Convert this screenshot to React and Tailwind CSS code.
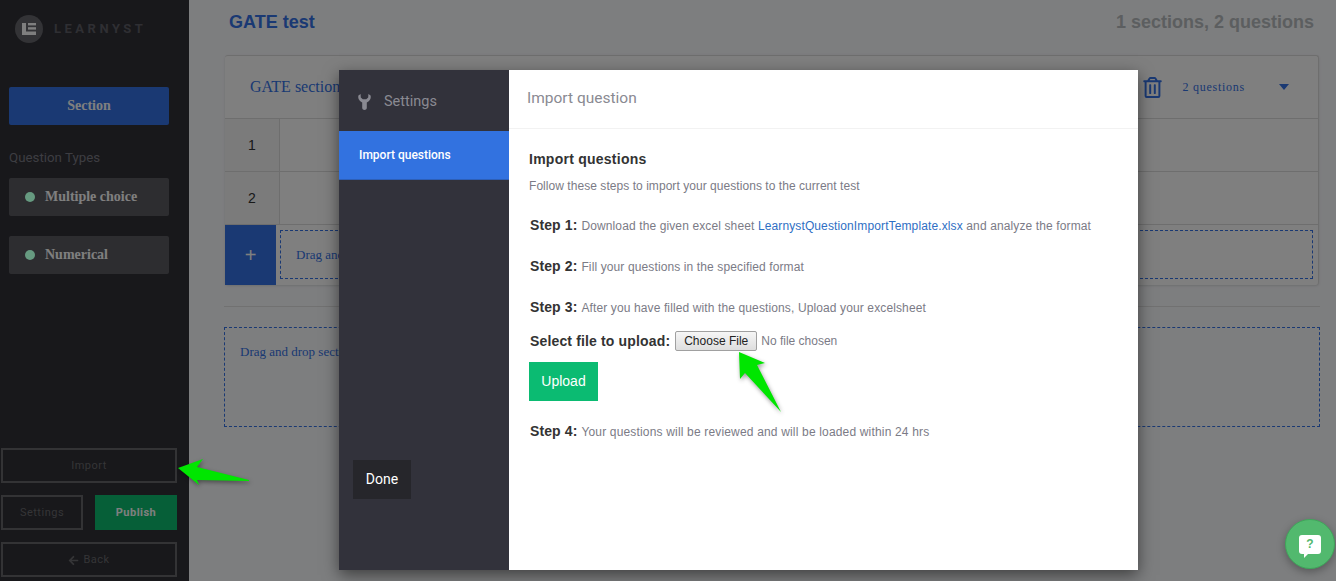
import React from "react";
import { FaArrowLeft, FaRegTrashAlt } from "react-icons/fa";

function Wrench() {
  return (
    <svg width="13" height="16" viewBox="0 0 13 16" className="fill-[#8a8a92]">
      <path d="M2.6 0 L0.4 1.6 Q-0.3 5.2 2 7 Q3.6 8 4.2 8.6 L4.2 14.2 Q4.4 16 6.5 16 Q8.6 16 8.8 14.2 L8.8 8.6 Q9.4 8 11 7 Q13.3 5.2 12.6 1.6 L10.4 0 L10.2 3.4 L8.2 5.2 L4.8 5.2 L2.8 3.4 Z" />
    </svg>
  );
}

function LogoMark() {
  return (
    <svg width="14" height="12" viewBox="0 0 14 12" className="fill-white">
      <path d="M0 0 H4 V8.5 H14 V12 H0 Z" />
      <rect x="6" y="0" width="8" height="2.4" />
      <rect x="6" y="4.2" width="8" height="2.4" />
    </svg>
  );
}

function Arrow({ className, points }) {
  return (
    <svg className={className} viewBox="0 0 80 80" width="80" height="80">
      <polygon points={points} className="fill-[#00e600]" />
    </svg>
  );
}

function Row({ n }) {
  return (
    <div className="flex h-[53px] border-b border-[#dcdcdc]">
      <div className="flex w-[55px] items-center justify-center border-r border-[#dcdcdc] bg-[#f6f6f6] pb-px font-['Liberation_Sans',sans-serif] text-sm text-[#333]">
        {n}
      </div>
      <div className="flex-1" />
    </div>
  );
}

function QuestionType({ label, className }) {
  return (
    <div className={"mx-[9px] flex h-[38px] w-[160px] items-center rounded-[2px] bg-[#5b5b61] pl-4 font-['Liberation_Serif',serif] text-sm font-bold text-white " + className}>
      <span className="relative z-10 mr-[10px] h-[10px] w-[10px] rounded-full bg-[#669a80]" />
      {label}
    </div>
  );
}

function Step({ n, children, className }) {
  return (
    <p className={"flex h-5 items-baseline pl-px leading-5 " + className}>
      <b className="mr-1 text-sm tracking-[0.1px] text-[#333]">Step {n}:</b>
      <span>{children}</span>
    </p>
  );
}

function App() {
  return (
    <div className="relative flex h-[581px] w-[1336px] overflow-hidden bg-[#fbfcff] font-['Liberation_Sans',sans-serif]">
      {/* sidebar */}
      <aside className="flex w-[189px] flex-none flex-col bg-[#303036]">
        <div className="flex items-center gap-[11px] pl-[15px] pt-[15px]">
          <div className="flex h-[28px] w-[28px] items-center justify-center rounded-full bg-[#66666c]">
            <LogoMark />
          </div>
          <span className="font-['Roboto',sans-serif] text-[13px] font-bold tracking-[3.5px] text-[#5e5e66]">LEARNYST</span>
        </div>
        <div className="mx-[9px] mt-[44px] flex h-[38px] w-[160px] items-center justify-center rounded-[2px] bg-[#3472e6] font-['Liberation_Serif',serif] text-sm font-bold text-white">
          Section
        </div>
        <div className="ml-[9px] mt-[23px] h-5 font-['Roboto',sans-serif] text-[13.3px] leading-5 text-[#7b7b85]">Question Types</div>
        <QuestionType label="Multiple choice" className="mt-[10px]" />
        <QuestionType label="Numerical" className="mt-5" />
        <div className="mt-auto flex flex-col gap-3 px-px pb-1 font-['Roboto',sans-serif] text-[11px] tracking-[0.5px] text-[#6a6a6e]">
          <div className="flex h-[35px] w-[176px] items-center justify-center border-2 border-[#66666a] pt-px">Import</div>
          <div className="flex gap-3">
            <div className="flex h-[35px] w-[82px] items-center justify-center border-2 border-[#66666a] pt-px">Settings</div>
            <div className="flex h-[35px] w-[82px] items-center justify-center bg-[#0cbf71] pt-px font-bold text-white">Publish</div>
          </div>
          <div className="flex h-[35px] w-[176px] items-center justify-center gap-1 border-2 border-[#66666a] pt-px">
            <FaArrowLeft size={11} />
            Back
          </div>
        </div>
      </aside>

      {/* test content, behind the overlay */}
      <main className="flex-1 pl-[35px] pr-4">
        <div className="flex h-[44px] items-center justify-between pl-[5px] pr-[6px] text-lg font-bold">
          <span className="text-[#3472e6]">GATE test</span>
          <span className="text-[#b8bcc0]">1 sections, 2 questions</span>
        </div>
        <div className="ml-px mr-px mt-[11px] rounded-[3px] border border-b-0 border-l-0 border-[#dcdcdc] bg-white font-['Liberation_Serif',serif] shadow-sm">
          <div className="flex h-[63px] items-center border-b border-[#dcdcdc] pl-[25px] text-[#3472e6]">
            <span className="text-base">GATE section</span>
            <FaRegTrashAlt size={21} className="ml-auto" />
            <span className="ml-[19px] text-xs tracking-[0.75px]">2 questions</span>
            <span className="ml-[34px] mr-[29px] h-0 w-0 border-x-[5px] border-t-[6px] border-x-transparent border-t-[#3472e6]" />
          </div>
          <Row n={1} />
          <Row n={2} />
          <div className="flex h-[60px]">
            <div className="flex w-[51px] items-center justify-center bg-[#3472e6] font-['Liberation_Sans',sans-serif] text-xl text-white">+</div>
            <div className="mb-[6px] ml-1 mr-[5px] mt-[5px] flex flex-1 items-center border border-dashed border-[#3472e6] pl-[15px] text-[13px] text-[#3472e6]">Drag and drop</div>
          </div>
        </div>
        <div className="mt-[21px] border-t border-[#e2e2e2]" />
        <div className="mt-5 h-[100px] border border-dashed border-[#3472e6] pl-[15px] pt-[14px] font-['Liberation_Serif',serif] text-[13px] text-[#3472e6]">
          Drag and drop sections here
        </div>
      </main>

      {/* overlay */}
      <div className="absolute inset-0 bg-black/50" />

      {/* modal */}
      <div className="absolute left-[339px] top-[70px] flex h-[500px] w-[799px] shadow-[0_5px_15px_rgba(0,0,0,0.5)]">
        <div className="relative flex w-[170px] flex-none flex-col bg-[#32323b]">
          <div className="flex h-[61px] items-center pl-[19px] pt-[3px] font-['Roboto',sans-serif] text-[14.5px] text-[#8a8a92]">
            <Wrench />
            <span className="ml-[13px]">Settings</span>
          </div>
          <div className="flex h-[49px] items-center border-b border-[#2d5fb8] bg-[#3272e0] pl-5 font-['Roboto',sans-serif] text-xs font-medium text-white">
            Import questions
          </div>
          <div className="absolute bottom-[71px] left-[14px] flex h-[39px] w-[58px] items-center justify-center bg-[#26262b] pb-px font-['Roboto',sans-serif] text-sm text-white">
            Done
          </div>
        </div>
        <div className="flex-1 bg-white text-xs text-[#7b7b86]">
          <div className="flex h-[59px] items-center border-b border-[#f2f2f2] pb-px pl-[18px] font-['Roboto',sans-serif] text-[15.5px] text-[#8a8a92]">
            Import question
          </div>
          <div className="pl-5 pt-5">
            <h4 className="text-sm font-bold leading-[20px] tracking-[0.25px] text-[#333]">Import questions</h4>
            <p className="mt-[9px] leading-4 tracking-[0.05px]">Follow these steps to import your questions to the current test</p>
            <Step n={1} className="mt-[21px] tracking-[0.12px]">
              Download the given excel sheet <span className="text-[#2f6fc4]">LearnystQuestionImportTemplate.xlsx</span> and analyze the format
            </Step>
            <Step n={2} className="mt-[21px] tracking-[0.12px]">Fill your questions in the specified format</Step>
            <Step n={3} className="mt-[21px] tracking-[0.12px]">After you have filled with the questions, Upload your excelsheet</Step>
            <div className="mt-[14px] flex items-center pl-px">
              <b className="text-sm tracking-[0.15px] text-[#333]">Select file to upload:</b>
              <button className="ml-[5px] h-[20px] w-[82px] rounded-[2px] border border-[#a0a0a0] bg-linear-to-b from-[#f6f6f6] to-[#dedede] text-xs text-[#222]">Choose File</button>
              <span className="ml-1">No file chosen</span>
            </div>
            <button className="mt-[11px] block h-[39px] w-[69px] bg-[#0bbb72] pb-px text-sm text-white">Upload</button>
            <Step n={4} className="mt-5 tracking-[0.17px]">Your questions will be reviewed and will be loaded within 24 hrs</Step>
          </div>
        </div>
      </div>

      {/* annotation arrows */}
      <Arrow className="absolute left-[175px] top-[445px] drop-shadow-[1px_2px_2px_rgba(0,0,0,0.4)]" points="3,23 28,14 22,22 74,35 74,36 22,35 24,40" />
      <Arrow className="absolute left-[735px] top-[349px] drop-shadow-[1px_2px_2px_rgba(0,0,0,0.4)]" points="4,3 30,14 22,16 46,63 10,24 5,30" />

      {/* help button */}
      <div className="absolute left-[1285px] top-[519px] flex h-[50px] w-[50px] items-center justify-center rounded-full border border-[#3fa65a] bg-[#52b96e] shadow-[0_3px_8px_rgba(0,0,0,0.3)]">
        <div className="relative flex h-[19px] w-[22px] items-center justify-center rounded-[3px] bg-white text-xs font-bold text-[#52b96e]">
          ?
          <span className="absolute -bottom-[4px] left-[5px] h-0 w-0 border-r-[5px] border-t-[5px] border-r-transparent border-t-white" />
        </div>
      </div>
    </div>
  );
}

export default App;
